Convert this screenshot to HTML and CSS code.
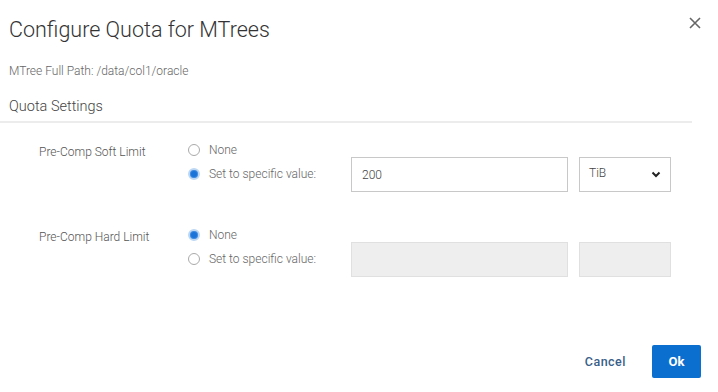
FILE: index.html
```html
<!DOCTYPE html>
<html lang="en">
<head>
    <meta charset="UTF-8">
    <title>Configure Quota for MTrees</title>
    <link rel="stylesheet" href="styles.css">
</head>
<body>
    <div class="dialog">
        <div class="dialog-header">
            <h1 class="dialog-title">Configure Quota for MTrees</h1>
            <button type="button" class="close-btn" aria-label="Close">
                <svg width="12" height="12" viewBox="0 0 12 12">
                    <path d="M1 1L11 11M11 1L1 11" stroke="#666" stroke-width="1.6" fill="none"/>
                </svg>
            </button>
        </div>

        <p class="mtree-path">MTree Full Path: /data/col1/oracle</p>

        <div class="section-title">Quota Settings</div>

        <div class="quota-rows">
            <div class="quota-row">
                <div class="row-label">Pre-Comp Soft Limit</div>
                <div class="radio-group">
                    <label class="radio"><span class="radio-dot"></span>None</label>
                    <label class="radio"><span class="radio-dot checked"></span>Set to specific value:</label>
                </div>
                <input class="value-input" type="text" value="200">
                <div class="unit-select">
                    <span>TiB</span>
                    <svg width="10" height="7" viewBox="0 0 10 7">
                        <path d="M1.5 1.5L5 5L8.5 1.5" stroke="#222" stroke-width="2" fill="none"/>
                    </svg>
                </div>
            </div>

            <div class="quota-row">
                <div class="row-label">Pre-Comp Hard Limit</div>
                <div class="radio-group">
                    <label class="radio"><span class="radio-dot checked"></span>None</label>
                    <label class="radio"><span class="radio-dot"></span>Set to specific value:</label>
                </div>
                <input class="value-input" type="text" disabled>
                <div class="unit-select disabled"></div>
            </div>
        </div>

        <div class="dialog-footer">
            <button type="button" class="cancel-btn">Cancel</button>
            <button type="button" class="ok-btn">Ok</button>
        </div>
    </div>
</body>
</html>
```

FILE: styles.css
```css
body {
    font-family: Roboto, 'Noto Sans', sans-serif;
    margin: 0;
    padding: 0;
    color: #333;
    background: #fff;
    width: 718px;
    height: 392px;
    overflow: hidden;
}

*, *::before, *::after {
    box-sizing: border-box;
}

.dialog {
    width: 718px;
    height: 392px;
    background: #fff;
}

.dialog-header {
    display: flex;
    justify-content: space-between;
    align-items: flex-start;
    padding: 15px 16px 0 9px;
}

.dialog-title {
    margin: 0;
    font-size: 21.5px;
    line-height: 30px;
    font-weight: 300;
    color: #333;
}

.close-btn {
    border: none;
    background: none;
    padding: 0;
    margin-top: 1px;
    width: 14px;
    height: 14px;
    display: flex;
    align-items: center;
    justify-content: center;
    cursor: pointer;
}

.mtree-path {
    margin: 19px 0 0 9px;
    font-size: 12px;
    line-height: 14px;
    font-weight: 300;
    color: #666;
}

.section-title {
    margin: 20px 26px 0 0;
    padding: 0 0 5px 9px;
    font-size: 14.5px;
    line-height: 18px;
    font-weight: 300;
    color: #444;
    border-bottom: 2px solid #ececec;
}

.quota-rows {
    display: flex;
    flex-direction: column;
    gap: 35px;
    padding-top: 19px;
}

.quota-row {
    display: grid;
    grid-template-columns: 148px 164px 228px 92px;
    align-items: start;
    padding-left: 39px;
}

.row-label {
    font-size: 12px;
    line-height: 16px;
    font-weight: 300;
    color: #555;
    padding-top: 2px;
}

.radio-group {
    display: flex;
    flex-direction: column;
    gap: 8px;
}

.radio {
    display: flex;
    align-items: center;
    gap: 9px;
    font-size: 12px;
    line-height: 16px;
    font-weight: 300;
    color: #666;
}

.radio-dot {
    width: 12px;
    height: 12px;
    border-radius: 50%;
    border: 1px solid #aaa;
    background: #fff;
    flex-shrink: 0;
    margin-left: 1px;
}

.radio-dot.checked {
    border: 2px solid #bcd7f3;
    background: #1a73d9;
    box-shadow: inset 0 0 0 1px #3d8ae0;
}

.value-input {
    margin-top: 15px;
    width: 217px;
    height: 35px;
    padding: 0 10px;
    border: 1px solid #c8c8c8;
    font-family: inherit;
    font-size: 12px;
    font-weight: 300;
    color: #444;
    background: #fff;
}

.value-input:disabled {
    background: #eeeeee;
    border-color: #e0e0e0;
}

.unit-select {
    margin-top: 15px;
    width: 92px;
    height: 35px;
    border: 1px solid #c8c8c8;
    display: flex;
    align-items: center;
    justify-content: space-between;
    padding: 0 9px 0 9px;
    font-size: 12px;
    font-weight: 300;
    color: #444;
}

.unit-select span {
    margin-top: -3px;
}

.unit-select.disabled {
    background: #eeeeee;
    border-color: #e0e0e0;
}

.dialog-footer {
    display: flex;
    justify-content: flex-end;
    align-items: center;
    gap: 26px;
    padding: 68px 17px 0 0;
}

.cancel-btn {
    border: none;
    background: none;
    font-family: inherit;
    font-size: 12.5px;
    font-weight: 500;
    letter-spacing: 0.5px;
    color: #3a5f8a;
    padding: 0;
    cursor: pointer;
}

.ok-btn {
    width: 49px;
    height: 33px;
    border: none;
    border-radius: 2px;
    background: #0b6fcf;
    color: #fff;
    font-family: inherit;
    font-size: 13px;
    font-weight: 700;
    cursor: pointer;
}
```
